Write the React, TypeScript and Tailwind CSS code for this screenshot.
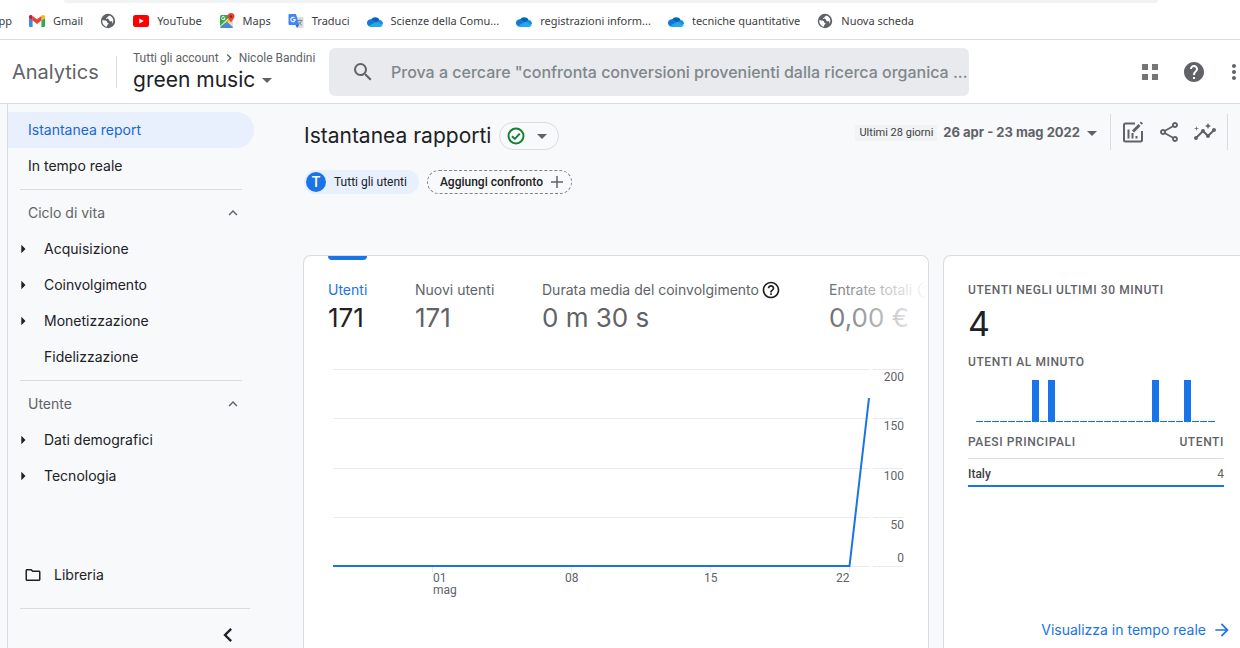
import React from "react";
import {
  MdArrowDropDown,
  MdArrowForward,
  MdArrowRight,
  MdChevronLeft,
  MdChevronRight,
  MdExpandLess,
  MdHelp,
  MdHelpOutline,
  MdInsights,
  MdMoreVert,
  MdOutlineFolder,
  MdOutlineShare,
  MdSearch,
} from "react-icons/md";

function GmailIcon() {
  return (
    <svg viewBox="0 0 16 12" className="h-3 w-4 shrink-0" aria-hidden="true">
      <path d="M1 12h2.6V5.6L0 3v8a1 1 0 0 0 1 1Z" fill="#4285f4" />
      <path d="M12.4 12H15a1 1 0 0 0 1-1V3l-3.6 2.6Z" fill="#34a853" />
      <path d="M12.4 1v4.6L16 3V1.800C16 .2 14.200-.500 13 .5Z" fill="#fbbc04" />
      <path d="M3.600 5.600V1L8 4.300 12.400 1v4.600L8 9Z" fill="#ea4335" />
      <path d="M0 1.800V3l3.600 2.600V1L3 .5C1.800-.500 0 .2 0 1.800Z" fill="#c5221f" />
    </svg>
  );
}

function YouTubeIcon() {
  return (
    <svg viewBox="0 0 16 12" className="h-3 w-4 shrink-0" aria-hidden="true">
      <rect width="16" height="12" rx="2.500" fill="#f00" />
      <path d="M6.300 3.400v5.200L10.800 6Z" fill="#fff" />
    </svg>
  );
}

function MapsIcon() {
  return (
    <svg viewBox="0 0 16 16" className="size-4 shrink-0" aria-hidden="true">
      <rect x="1" y="2" width="13" height="13" rx="1.500" fill="#34a853" />
      <path d="M1 14 13.500 2 14 14.500 8 9Z" fill="#fbbc04" />
      <path d="M2 15 8 9l6 6Z" fill="#4285f4" />
      <path d="m8.500 9 5.500 5V7Z" fill="#dadce0" />
      <path d="M1 13.500 12.500 2.500" stroke="#fff" strokeWidth="1" />
      <path d="M6 5.200H4.500M6 5.200a1.700 1.700 0 1 1-.5-1.300" stroke="#fff" fill="none" strokeWidth=".9" />
      <path d="M12 0a3.500 3.500 0 0 0-3.500 3.500C8.500 6 11.300 6.700 12 10c.7-3.300 3.500-4 3.500-6.500A3.500 3.500 0 0 0 12 0Z" fill="#ea4335" />
      <circle cx="12" cy="3.500" r="1.200" fill="#8c1d18" />
    </svg>
  );
}

function TranslateIcon() {
  return (
    <svg viewBox="0 0 16 16" className="size-4 shrink-0" aria-hidden="true">
      <path d="M6 4h8.500a1 1 0 0 1 1 1v9a1 1 0 0 1-1 1H9Z" fill="#dadce0" />
      <path d="M9.500 7.500h5M12 6.500v1M13.500 7.500c-.5 2-1.700 3.500-3.500 4.500M10.800 9.200c.7 1.200 1.700 2.200 3 2.800" stroke="#80868b" fill="none" />
      <path d="M1.500 1H8l3.200 11H1.500a1 1 0 0 1-1-1V2a1 1 0 0 1 1-1Z" fill="#4285f4" />
      <path d="M7.500 12h3.700L9 15Z" fill="#3367d6" />
      <path d="M5.200 6.600h2a2.200 2.200 0 1 1-.7-1.700" stroke="#fff" fill="none" strokeWidth="1.100" />
    </svg>
  );
}

function CloudIcon() {
  return (
    <svg viewBox="0 0 16 11" className="h-[11px] w-4 shrink-0" aria-hidden="true">
      <path d="M4 3.500a5 5 0 0 1 8.800.7L9 8 3 6Z" fill="#0364b8" />
      <path d="M0 7.200a3.700 3.700 0 0 1 5.700-3.400L10.500 7 2 10.300A3.700 3.700 0 0 1 0 7.200Z" fill="#0f78d4" />
      <path d="M9 6.200 12.600 4a3.500 3.500 0 0 1 3.300 4L13 9Z" fill="#1490df" />
      <path d="M1.500 10 9 6.100l6.900 2.500A3 3 0 0 1 13 11H3.700a3.500 3.500 0 0 1-2.200-1Z" fill="#28a8ea" />
    </svg>
  );
}

function GlobeIcon() {
  return (
    <svg viewBox="0 0 16 16" className="size-4 shrink-0" aria-hidden="true">
      <circle cx="8" cy="8" r="7.200" fill="#5f6368" />
      <path d="M2.300 7.300c1.500.2 3.200 0 4.200.7.900.7.300 1.700 1.500 2 .9.200.5 1.300-.3 1.600-.6.300-.4 1.300-.8 2.200C4 13.300 2 10.600 2.300 7.300Z" fill="#fff" />
      <path d="M9.500 2.400c-.3.900-1.900.7-2 1.700-.1.800-1.400.6-1.300 1.400.2.900 1.800.2 2.500.8.800.7.200 1.600 1.200 2 .9.300 1.700-.3 2.300.3.400.4-.2 1.200.2 2.200 1.700-2.600 1.400-6.400-2.900-8.400Z" fill="#fff" />
    </svg>
  );
}

function EditChartIcon() {
  return (
    <svg viewBox="-1 -1 24 24" className="size-6" fill="none" stroke="#5f6368" strokeWidth="2" aria-hidden="true">
      <path d="M13 2.500H3.500A1.500 1.500 0 0 0 2 4v15a1.500 1.500 0 0 0 1.500 1.500h15A1.500 1.500 0 0 0 20 19v-9" />
      <path d="M6.500 8.500v9M10.500 12v5.500M14.500 15v2.500" />
      <path d="m11 10.500 6.500-6.500" strokeWidth="3" />
      <path d="m18.800 2.700 1.200-1.200" strokeWidth="3" />
    </svg>
  );
}

const bookmarks = [
  { label: "Gmail", icon: <GmailIcon /> },
  { label: "", icon: <GlobeIcon /> },
  { label: "YouTube", icon: <YouTubeIcon /> },
  { label: "Maps", icon: <MapsIcon /> },
  { label: "Traduci", icon: <TranslateIcon /> },
  { label: "Scienze della Comu...", icon: <CloudIcon /> },
  { label: "registrazioni inform...", icon: <CloudIcon /> },
  { label: "tecniche quantitative", icon: <CloudIcon /> },
  { label: "Nuova scheda", icon: <GlobeIcon /> },
];

function BookmarksBar() {
  return (
    <div className="border-b border-[#dadce0] bg-white">
      <div className="mr-[82px] ml-16 h-[3px] rounded-b-lg bg-[#f1f3f4]" />
      <nav aria-label="Preferiti" className="flex h-9 items-center gap-[17px] overflow-hidden font-['Noto_Sans',sans-serif] text-[11px] whitespace-nowrap text-[#3c4043]">
        <a href="#app" className="flex w-3 shrink-0 justify-end">pp</a>
        {bookmarks.map((b, i) => (
          <a key={i} href="#bookmark" aria-label={b.label || "Sito"} className="flex shrink-0 items-center gap-2">
            {b.icon}
            {b.label && <span>{b.label}</span>}
          </a>
        ))}
      </nav>
    </div>
  );
}

function Header() {
  return (
    <header className="flex h-16 shrink-0 items-center border-b border-[#dadce0] bg-white pl-3">
      <span className="w-[104px] shrink-0 text-xl text-[#5f6368]">Analytics</span>
      <div className="h-8 w-px shrink-0 bg-[#dadce0]" />
      <button type="button" className="w-[212px] shrink-0 pb-1 pl-4 text-left whitespace-nowrap">
        <span className="flex h-5 items-center gap-0.5 font-[Roboto,sans-serif] text-xs text-[#5f6368]">
          Tutti gli account
          <MdChevronRight className="size-4" />
          Nicole Bandini
        </span>
        <span className="flex h-6 items-center text-[21px] text-[#202124]">
          green music
          <MdArrowDropDown className="size-6 text-[#5f6368]" />
        </span>
      </button>
      <label className="flex h-12 min-w-0 flex-1 items-center rounded-md bg-[#e8eaed] pl-[22px]">
        <MdSearch className="size-6 shrink-0 text-[#5f6368]" aria-label="Cerca" />
        <input
          type="text"
          placeholder={'Prova a cercare "confronta conversioni provenienti dalla ricerca organica ...'}
          className="ml-4 min-w-0 flex-1 bg-transparent text-base font-medium text-ellipsis outline-none placeholder:text-[#80868b]"
        />
      </label>
      <div className="flex w-[271px] shrink-0 items-center justify-end gap-5 overflow-hidden text-[#5f6368]">
        <button type="button" aria-label="Prodotti" className="p-1">
          <svg viewBox="0 0 16 16" className="size-4" fill="#757575" aria-hidden="true">
            <path d="M0 0h6v6H0zM10 0h6v6h-6zM0 10h6v6H0zM10 10h6v6h-6z" />
          </svg>
        </button>
        <button type="button" aria-label="Guida">
          <MdHelp className="size-6" />
        </button>
        <button type="button" aria-label="Altro" className="-mr-1.5 -ml-1">
          <MdMoreVert className="size-6" />
        </button>
      </div>
    </header>
  );
}

function NavItem({ label, leaf = false }: { label: string; leaf?: boolean }) {
  return (
    <a href="#report" className="flex h-9 items-center pl-[5px]">
      <span className="w-[31px]">{!leaf && <MdArrowRight className="size-5" aria-hidden="true" />}</span>
      {label}
    </a>
  );
}

function NavSection({ title, children }: { title: string; children: React.ReactNode }) {
  return (
    <section>
      <div className="mt-[5px] mr-3 mb-[5px] ml-3 border-t border-[#dadce0]" />
      <button type="button" className="flex h-9 w-full items-center justify-between pr-3 pl-5 text-[#5f6368]">
        {title}
        <MdExpandLess className="size-[18px]" aria-hidden="true" />
      </button>
      {children}
    </section>
  );
}

function Sidebar() {
  return (
    <aside className="ml-[7px] flex w-[247px] shrink-0 flex-col border-l border-[#dadce0] pt-2 text-sm text-[#202124]">
      <nav aria-label="Report">
        <a href="#snapshot" className="flex h-9 items-center rounded-r-full bg-[#e8f0fe] pl-5 text-[#1967d2]">
          Istantanea report
        </a>
        <a href="#realtime" className="flex h-9 items-center pl-5">
          In tempo reale
        </a>
        <NavSection title="Ciclo di vita">
          <NavItem label="Acquisizione" />
          <NavItem label="Coinvolgimento" />
          <NavItem label="Monetizzazione" />
          <NavItem label="Fidelizzazione" leaf />
        </NavSection>
        <NavSection title="Utente">
          <NavItem label="Dati demografici" />
          <NavItem label="Tecnologia" />
        </NavSection>
      </nav>
      <div className="mt-auto">
        <a href="#library" className="flex h-9 items-center gap-3 pl-4">
          <MdOutlineFolder className="size-[18px]" aria-hidden="true" />
          Libreria
        </a>
        <div className="mt-[15px] mr-1 ml-3 border-t border-[#dadce0]" />
        <div className="flex h-[39px] justify-end pt-3 pr-3">
          <button type="button" aria-label="Comprimi" className="size-7">
            <MdChevronLeft className="size-7" />
          </button>
        </div>
      </div>
    </aside>
  );
}

function Toolbar() {
  return (
    <div className="flex items-start justify-between pr-3 pl-px">
      <div className="flex h-16 items-center gap-2">
        <h1 className="text-[21px] whitespace-nowrap text-[#202124]">Istantanea rapporti</h1>
        <button type="button" aria-label="Stato dei dati" className="flex h-7 w-[60px] items-center justify-between rounded-full border border-[#dadce0] pr-1 pl-[7px]">
          <svg viewBox="0 0 18 18" className="size-[18px]" fill="none" stroke="#188038" strokeWidth="2" aria-hidden="true">
            <circle cx="9" cy="9" r="7.500" />
            <path d="m5 9.200 2.800 2.700 5-5.300" />
          </svg>
          <MdArrowDropDown className="size-6 text-[#5f6368]" />
        </button>
      </div>
      <div className="mt-[10px] flex h-9 items-center text-[#5f6368]">
        <button type="button" className="flex items-center pt-px whitespace-nowrap">
          <span className="bg-[#f1f3f4] px-1 font-[Roboto,sans-serif] text-[11px] leading-4 text-[#3c4043]">Ultimi 28 giorni</span>
          <span className="ml-1.5 text-[13px] font-bold">26 apr - 23 mag 2022</span>
          <MdArrowDropDown className="size-6" />
        </button>
        <div className="ml-1.5 flex h-9 items-center gap-3 border-x border-[#dadce0] px-[10px]">
          <button type="button" aria-label="Personalizza report">
            <EditChartIcon />
          </button>
          <button type="button" aria-label="Condividi">
            <MdOutlineShare className="size-6" />
          </button>
          <button type="button" aria-label="Approfondimenti">
            <MdInsights className="size-6" />
          </button>
        </div>
      </div>
    </div>
  );
}

function Comparisons() {
  return (
    <div className="mt-0.5 flex gap-2 pl-px font-[Roboto,sans-serif] text-xs text-[#202124]">
      <button type="button" className="flex h-6 items-center gap-2 rounded-full bg-[#e8f0fe] pr-3 pl-0.5">
        <span className="flex size-5 items-center justify-center rounded-full bg-[#1a73e8] text-sm font-medium text-white">T</span>
        Tutti gli utenti
      </button>
      <button type="button" className="flex h-6 items-center gap-2 rounded-full border border-dashed border-[#80868b] pr-2 pl-3 font-medium">
        Aggiungi confronto
        <svg viewBox="0 0 12 12" className="size-3" stroke="#5f6368" strokeWidth="1.500" aria-hidden="true">
          <path d="M6 0v12M0 6h12" />
        </svg>
      </button>
    </div>
  );
}

const gridLines = [
  { y: 9, label: "200", labelY: 21 },
  { y: 58, label: "150", labelY: 70 },
  { y: 108, label: "100", labelY: 120 },
  { y: 157, label: "50", labelY: 169 },
  { y: 206, label: "0", labelY: 202 },
];

function UsersChart() {
  return (
    <svg viewBox="0 0 624 240" className="w-full font-[Roboto,sans-serif] text-xs" role="img" aria-label="Utenti nel tempo">
      {gridLines.map((g) => (
        <g key={g.label}>
          <path d={`M29 ${g.y}.5H565M569 ${g.y}.5H599`} stroke="#e8eaed" />
          <text x="600" y={g.labelY} textAnchor="end" fill="#5f6368">{g.label}</text>
        </g>
      ))}
      <path d="M128.500 207v5M267.500 207v5M406.500 207v5M545.500 207v5" stroke="#e8eaed" />
      <path d="M29 206H545.500L565 38" fill="none" stroke="#1a73e8" strokeWidth="2" />
      <g fill="#5f6368">
        <text x="129" y="222">01</text>
        <text x="129" y="234">mag</text>
        <text x="261" y="222">08</text>
        <text x="400" y="222">15</text>
        <text x="532" y="222">22</text>
      </g>
    </svg>
  );
}

function OverviewCard() {
  return (
    <section className="min-w-0 flex-1 rounded-t-lg border border-b-0 border-[#dadce0] bg-white">
      <div className="relative flex gap-12 overflow-hidden rounded-t-lg pl-6 whitespace-nowrap text-[#5f6368]">
        <button type="button" className="w-[39px] shrink-0 text-left">
          <span className="block h-1 rounded-b bg-[#1a73e8]" />
          <span className="mt-5 block text-sm text-[#1a73e8]">Utenti</span>
          <span className="block text-[26px] leading-9 text-[#202124]">171</span>
        </button>
        <button type="button" className="w-[79px] shrink-0 pt-6 text-left">
          <span className="block text-sm">Nuovi utenti</span>
          <span className="block text-[26px] leading-9">171</span>
        </button>
        <button type="button" className="w-[239px] shrink-0 pt-6 text-left">
          <span className="flex items-center justify-between text-sm">
            Durata media del coinvolgimento
            <MdHelpOutline className="size-5 shrink-0 text-[#202124]" aria-hidden="true" />
          </span>
          <span className="block text-[26px] leading-9">0 m 30 s</span>
        </button>
        <button type="button" className="shrink-0 pt-6 text-left">
          <span className="flex items-center gap-1 text-sm">
            Entrate totali
            <MdHelpOutline className="size-5" aria-hidden="true" />
          </span>
          <span className="block text-[26px] leading-9">0,00 €</span>
        </button>
        <div className="pointer-events-none absolute inset-y-0 right-0 w-[106px] bg-linear-to-r from-white/0 to-white" />
      </div>
      <div className="mt-6">
        <UsersChart />
      </div>
    </section>
  );
}

const minutes = Array.from({ length: 30 }, (_, i) => ([7, 9, 22, 26].includes(i) ? 1 : 0));

function RealtimeCard() {
  return (
    <section className="flex w-[297px] shrink-0 flex-col rounded-tl-lg border-t border-l border-[#dadce0] bg-white pt-6 pr-4 pl-6 font-[Roboto,sans-serif] text-xs text-[#5f6368]">
      <h2 className="leading-5 font-medium tracking-wider uppercase">Utenti negli ultimi 30 minuti</h2>
      <p className="font-[Inter,sans-serif] text-[34px] leading-12 text-[#202124]">4</p>
      <h3 className="mt-1.5 leading-4 font-medium tracking-wider uppercase">Utenti al minuto</h3>
      <svg viewBox="0 0 256 46" className="mt-[9px] w-full" fill="#1a73e8" role="img" aria-label="Utenti al minuto">
        {minutes.map((value, i) => (
          <React.Fragment key={i}>
            <rect x={8 + i * 8} y={value ? 1 : 42} width="7" height={value ? 42 : 1} />
            <rect x={11 + i * 8} y="43" width="1" height="1" fill="#dadce0" />
          </React.Fragment>
        ))}
      </svg>
      <table className="mt-0.5 w-full">
        <thead>
          <tr className="h-[31px] border-b border-[#dadce0] tracking-wider uppercase">
            <th className="text-left font-medium">Paesi principali</th>
            <th className="text-right font-medium">Utenti</th>
          </tr>
        </thead>
        <tbody>
          <tr className="h-7 border-b-2 border-[#1a73e8]">
            <td className="pt-1 font-medium text-[#3c4043]">Italy</td>
            <td className="pt-1 text-right">4</td>
          </tr>
        </tbody>
      </table>
      <a href="#realtime" className="mt-auto mb-2 -mr-2 flex h-5 items-center justify-end gap-1.5 font-[Inter,sans-serif] text-sm text-[#1a73e8]">
        Visualizza in tempo reale
        <MdArrowForward className="size-5" aria-hidden="true" />
      </a>
    </section>
  );
}

export default function App() {
  return (
    <div className="flex min-h-screen flex-col overflow-hidden bg-[#f8f9fb] font-[Inter,sans-serif]">
      <BookmarksBar />
      <Header />
      <div className="flex flex-1">
        <Sidebar />
        <main className="flex min-w-0 flex-1 flex-col pl-[49px]">
          <Toolbar />
          <Comparisons />
          <div className="mt-[61px] flex flex-1 gap-3.5">
            <OverviewCard />
            <RealtimeCard />
          </div>
        </main>
      </div>
    </div>
  );
}
